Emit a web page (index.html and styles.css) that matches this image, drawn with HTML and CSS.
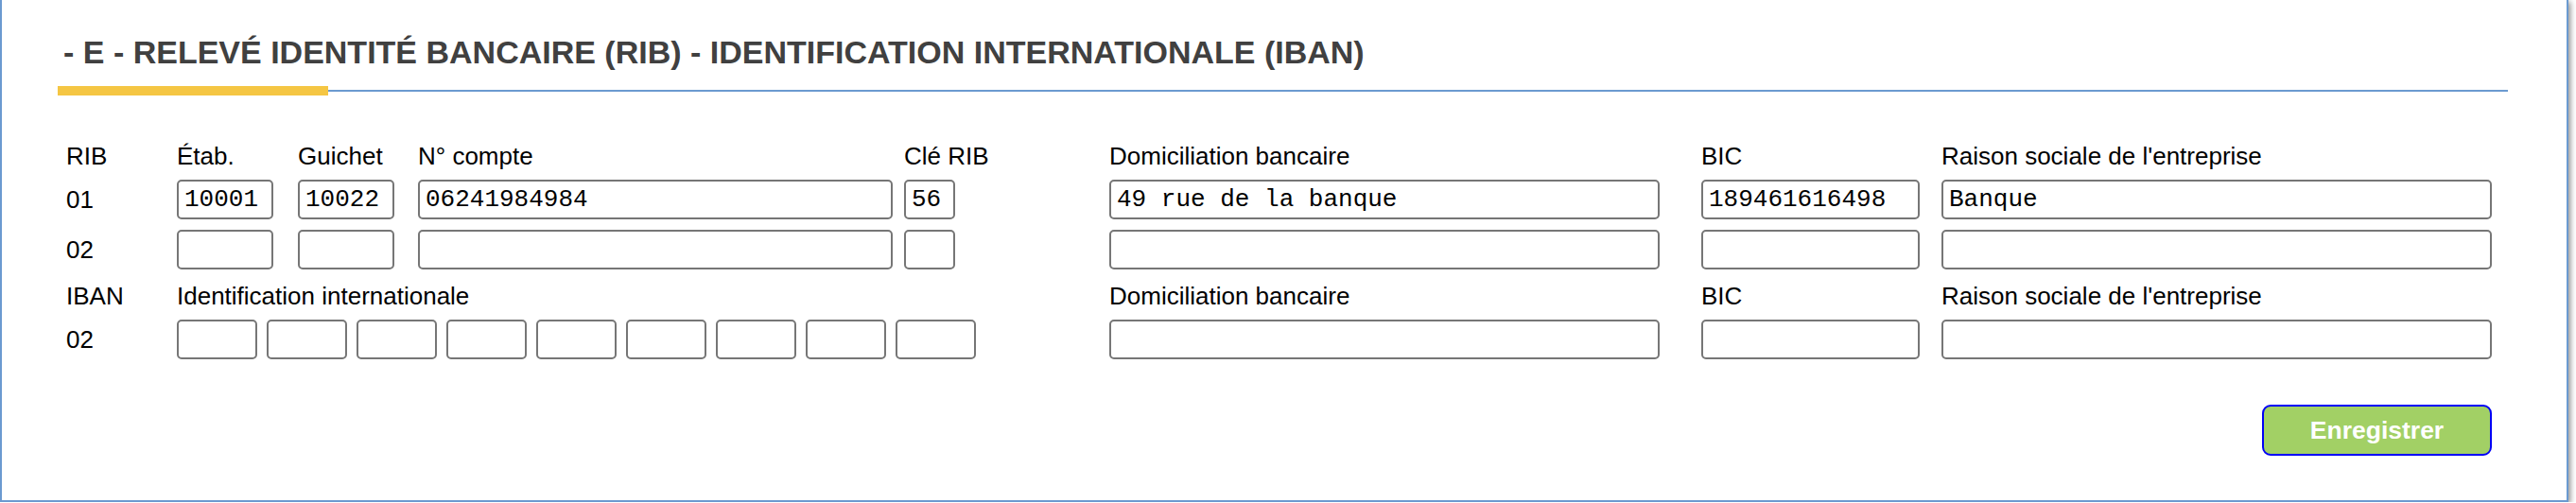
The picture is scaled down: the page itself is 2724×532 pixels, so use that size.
FILE: index.html
```html
<!DOCTYPE html>
<html lang="fr">
<head>
    <meta charset="UTF-8">
    <meta name="viewport" content="width=device-width, initial-scale=1.0">
    <title>Relevé identité bancaire</title>
    <link rel="stylesheet" href="styles.css">
</head>
<body>

<div class="panel">
    <h2 class="section-title">- E - RELEVÉ IDENTITÉ BANCAIRE (RIB) - IDENTIFICATION INTERNATIONALE (IBAN)</h2>
    <div class="title-rule"><span class="rule-accent"></span><span class="rule-line"></span></div>

    <form class="bank-form" onsubmit="return false;">
        <!-- RIB -->
        <span class="lbl">RIB</span>
        <span class="lbl">Étab.</span>
        <span class="lbl">Guichet</span>
        <span class="lbl">N° compte</span>
        <span class="lbl">Clé RIB</span>
        <span class="lbl">Domiciliation bancaire</span>
        <span class="lbl">BIC</span>
        <span class="lbl">Raison sociale de l'entreprise</span>

        <span class="lbl row-lbl">01</span>
        <input class="field f-code" type="text" value="10001">
        <input class="field f-code" type="text" value="10022">
        <input class="field f-account" type="text" value="06241984984">
        <input class="field f-key" type="text" value="56">
        <input class="field f-wide" type="text" value="49 rue de la banque">
        <input class="field f-bic" type="text" value="189461616498">
        <input class="field f-wide" type="text" value="Banque">

        <span class="lbl row-lbl">02</span>
        <input class="field f-code" type="text">
        <input class="field f-code" type="text">
        <input class="field f-account" type="text">
        <input class="field f-key" type="text">
        <input class="field f-wide" type="text">
        <input class="field f-bic" type="text">
        <input class="field f-wide" type="text">

        <!-- IBAN -->
        <span class="lbl">IBAN</span>
        <span class="lbl span-iban">Identification internationale</span>
        <span class="lbl">Domiciliation bancaire</span>
        <span class="lbl">BIC</span>
        <span class="lbl">Raison sociale de l'entreprise</span>

        <span class="lbl row-lbl">02</span>
        <div class="iban-parts span-iban">
            <input class="field f-iban" type="text">
            <input class="field f-iban" type="text">
            <input class="field f-iban" type="text">
            <input class="field f-iban" type="text">
            <input class="field f-iban" type="text">
            <input class="field f-iban" type="text">
            <input class="field f-iban" type="text">
            <input class="field f-iban" type="text">
            <input class="field f-iban" type="text">
        </div>
        <input class="field f-wide" type="text">
        <input class="field f-bic" type="text">
        <input class="field f-wide" type="text">

        <button class="btn-save" type="submit">Enregistrer</button>
    </form>
</div>

</body>
</html>
```

FILE: styles.css
```css
body {
    margin: 0;
    background: #fff;
    font-family: "Liberation Sans", Arial, sans-serif;
}
.panel {
    box-sizing: border-box;
    width: 2716px;
    height: 531px;
    padding: 36px 62px 0 59px;
    border: 2px solid #6b9ad0;
    border-top: none;
    box-shadow: 2px 2px 6px rgba(0, 0, 0, 0.45);
    background: #fff;
}
.section-title {
    margin: 0;
    padding-left: 6px;
    font-size: 34px;
    font-weight: bold;
    color: #404040;
}
.title-rule {
    display: flex;
    align-items: center;
    height: 10px;
    margin-top: 16px;
}
.rule-accent {
    width: 286px;
    height: 10px;
    background: #f5c643;
}
.rule-line {
    flex: 1;
    height: 2px;
    background: #6b9ad0;
}
.bank-form {
    display: grid;
    grid-template-columns: 117px 128px 127px 514px 217px 626px 254px 582px;
    grid-template-rows: 40px 53px 55px 40px 42px auto;
    align-items: start;
    margin: 49px 0 0 9px;
}
.lbl {
    font-size: 26px;
    color: #000;
    white-space: nowrap;
}
/* row numbers sit on the middle of the inputs */
.row-lbl {
    line-height: 42px;
}
.span-iban {
    grid-column: 2 / 6;
}
.field {
    box-sizing: border-box;
    height: 42px;
    margin: 0;
    padding: 0 6px;
    border: 2px solid #767676;
    border-radius: 5px;
    background: #fff;
    font-family: "Liberation Mono", "Courier New", monospace;
    font-size: 26px;
    color: #000;
}
.f-code { width: 102px; }
.f-account { width: 502px; }
.f-key { width: 54px; }
.f-wide { width: 582px; }
.f-bic { width: 231px; }
.f-iban { width: 85px; }
.iban-parts {
    display: flex;
    gap: 10px;
}
.btn-save {
    grid-column: 8;
    justify-self: end;
    width: 243px;
    height: 54px;
    margin-top: 48px;
    border: 2px solid #0000f5;
    border-radius: 9px;
    background: #a2d065;
    color: #fff;
    font-family: "Liberation Sans", Arial, sans-serif;
    font-size: 26.5px;
    font-weight: bold;
    cursor: pointer;
}
```
